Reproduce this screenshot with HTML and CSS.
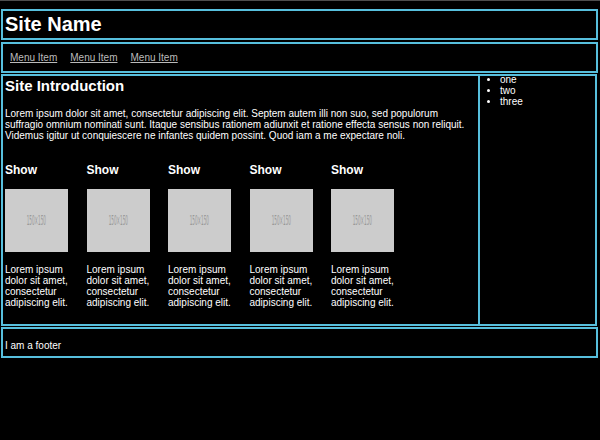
FILE: index.html
```html
<!DOCTYPE html>
<html lang="en">

<head>
    <meta charset="UTF-8">
    <meta name="viewport" content="width=device-width, initial-scale=1.0">
    <title>Site Name</title>
    <link rel="stylesheet" href="styles.css">
</head>

<body>
    <header class="box site-header">
        <h1>Site Name</h1>
    </header>

    <nav class="box site-nav">
        <a href="#">Menu Item</a>
        <a href="#">Menu Item</a>
        <a href="#">Menu Item</a>
    </nav>

    <div class="box site-main">
        <main class="content">
            <h2>Site Introduction</h2>
            <p class="intro">Lorem ipsum dolor sit amet, consectetur adipiscing elit. Septem autem illi non suo, sed populorum
                suffragio omnium nominati sunt. Itaque sensibus rationem adiunxit et ratione effecta sensus non reliquit.
                Videmus igitur ut conquiescere ne infantes quidem possint. Quod iam a me expectare noli.</p>

            <div class="shows">
                <div class="show">
                    <h3>Show</h3>
                    <div class="thumb"><span>150×150</span></div>
                    <p>Lorem ipsum dolor sit amet, consectetur adipiscing elit.</p>
                </div>
                <div class="show">
                    <h3>Show</h3>
                    <div class="thumb"><span>150×150</span></div>
                    <p>Lorem ipsum dolor sit amet, consectetur adipiscing elit.</p>
                </div>
                <div class="show">
                    <h3>Show</h3>
                    <div class="thumb"><span>150×150</span></div>
                    <p>Lorem ipsum dolor sit amet, consectetur adipiscing elit.</p>
                </div>
                <div class="show">
                    <h3>Show</h3>
                    <div class="thumb"><span>150×150</span></div>
                    <p>Lorem ipsum dolor sit amet, consectetur adipiscing elit.</p>
                </div>
                <div class="show">
                    <h3>Show</h3>
                    <div class="thumb"><span>150×150</span></div>
                    <p>Lorem ipsum dolor sit amet, consectetur adipiscing elit.</p>
                </div>
            </div>
        </main>

        <aside class="sidebar">
            <ul>
                <li>one</li>
                <li>two</li>
                <li>three</li>
            </ul>
        </aside>
    </div>

    <footer class="box site-footer">
        <p>I am a footer</p>
    </footer>
</body>

</html>
```

FILE: styles.css
```css
body {
    font-family: 'Liberation Sans', Arial, Helvetica, sans-serif;
    font-size: 10px;
    line-height: 11px;
    color: #fff;
    background-color: #000;
    margin: 0;
    padding-top: 8px;
    border-top: 1px solid #4d4d4d;
}

.box {
    border: 2px solid #57bfdd;
    margin: 0 2px 2px 1px;
}

.site-header {
    padding: 2px 2px;
}

.site-header h1 {
    font-size: 20px;
    line-height: 23px;
    margin: 0;
}

.site-nav {
    height: 27px;
    display: flex;
    align-items: center;
    gap: 13px;
    padding: 0 7px;
    margin-bottom: 1px;
}

.site-nav a {
    color: #bbb;
    text-decoration: underline;
}

.site-main {
    display: grid;
    grid-template-columns: 475px 1fr;
    margin-right: 3px;
    margin-bottom: 1px;
}

.content {
    padding: 0 2px;
}

.content h2 {
    font-size: 15px;
    line-height: 17px;
    margin: 1px 0 0;
}

.intro {
    margin: 14px 0 10px;
}

.shows {
    display: flex;
    gap: 17.5px;
}

.show {
    width: 64px;
}

.show h3 {
    font-size: 12px;
    line-height: 14px;
    margin: 12px 0;
}

.thumb {
    width: 63px;
    height: 63px;
    background-color: #ccc;
    display: flex;
    align-items: center;
    justify-content: center;
    margin-bottom: 12px;
    overflow: hidden;
}

.thumb span {
    color: #999;
    font-family: 'DejaVu Sans Condensed', 'Liberation Sans', sans-serif;
    font-size: 14px;
    transform: scaleX(0.33);
    white-space: nowrap;
}

.show p {
    margin: 0 0 16px;
}

.sidebar {
    border-left: 2px solid #57bfdd;
}

.sidebar ul {
    margin: -2px 0 0;
    padding-left: 20px;
}

.site-footer {
    padding: 11px 2px 5px;
}

.site-footer p {
    margin: 0;
}
```
